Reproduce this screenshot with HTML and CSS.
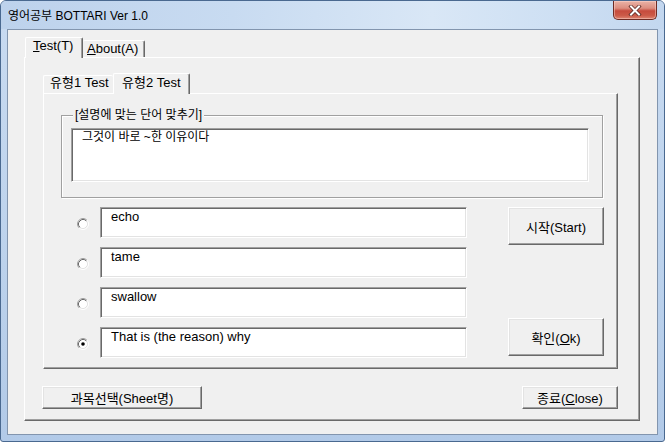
FILE: index.html
```html
<!DOCTYPE html>
<html lang="ko">
<head>
<meta charset="utf-8">
<title>영어공부 BOTTARI Ver 1.0</title>
<link rel="stylesheet" href="styles.css">
</head>
<body>
<div class="window">
  <div class="titlebar">
    <span class="title">영어공부 BOTTARI Ver 1.0</span>
    <div class="close">
      <svg width="14" height="11" viewBox="0 0 14 11">
        <path d="M3 1.5 L11 9.5 M11 1.5 L3 9.5" stroke="#5e2a24" stroke-width="3.6" stroke-linecap="square"/>
        <path d="M3 1.5 L11 9.5 M11 1.5 L3 9.5" stroke="#ffffff" stroke-width="2" stroke-linecap="square"/>
      </svg>
    </div>
  </div>
  <div class="client">
    <div class="tabs outer-tabs">
      <div class="tab active tab-test"><u>T</u>est(T)</div>
      <div class="tab tab-about"><u>A</u>bout(A)</div>
    </div>
    <div class="panel outer-panel">
      <div class="tabs inner-tabs">
        <div class="tab tab-t1">유형1 Test</div>
        <div class="tab active tab-t2">유형2 Test</div>
      </div>
      <div class="panel inner-panel">
        <div class="group">
          <span class="group-label">[설명에 맞는 단어 맞추기]</span>
          <div class="textbox big">그것이 바로 ~한 이유이다</div>
        </div>
        <div class="quiz">
          <div class="options">
            <div class="option">
              <svg class="radio" width="12" height="12" viewBox="0 0 12 12">
                <circle cx="6" cy="6" r="4.5" fill="#fff"/>
                <path d="M9.89 2.11A5.5 5.5 0 0 1 2.11 9.89" fill="none" stroke="#ffffff"/>
                <path d="M9.18 2.82A4.5 4.5 0 0 1 2.82 9.18" fill="none" stroke="#e3e3e3"/>
                <path d="M2.11 9.89A5.5 5.5 0 0 1 9.89 2.11" fill="none" stroke="#a0a0a0"/>
                <path d="M2.82 9.18A4.5 4.5 0 0 1 9.18 2.82" fill="none" stroke="#696969"/>
              </svg>
              <div class="textbox">echo</div>
            </div>
            <div class="option">
              <svg class="radio" width="12" height="12" viewBox="0 0 12 12">
                <circle cx="6" cy="6" r="4.5" fill="#fff"/>
                <path d="M9.89 2.11A5.5 5.5 0 0 1 2.11 9.89" fill="none" stroke="#ffffff"/>
                <path d="M9.18 2.82A4.5 4.5 0 0 1 2.82 9.18" fill="none" stroke="#e3e3e3"/>
                <path d="M2.11 9.89A5.5 5.5 0 0 1 9.89 2.11" fill="none" stroke="#a0a0a0"/>
                <path d="M2.82 9.18A4.5 4.5 0 0 1 9.18 2.82" fill="none" stroke="#696969"/>
              </svg>
              <div class="textbox">tame</div>
            </div>
            <div class="option">
              <svg class="radio" width="12" height="12" viewBox="0 0 12 12">
                <circle cx="6" cy="6" r="4.5" fill="#fff"/>
                <path d="M9.89 2.11A5.5 5.5 0 0 1 2.11 9.89" fill="none" stroke="#ffffff"/>
                <path d="M9.18 2.82A4.5 4.5 0 0 1 2.82 9.18" fill="none" stroke="#e3e3e3"/>
                <path d="M2.11 9.89A5.5 5.5 0 0 1 9.89 2.11" fill="none" stroke="#a0a0a0"/>
                <path d="M2.82 9.18A4.5 4.5 0 0 1 9.18 2.82" fill="none" stroke="#696969"/>
              </svg>
              <div class="textbox">swallow</div>
            </div>
            <div class="option">
              <svg class="radio" width="12" height="12" viewBox="0 0 12 12">
                <circle cx="6" cy="6" r="4.5" fill="#fff"/>
                <path d="M9.89 2.11A5.5 5.5 0 0 1 2.11 9.89" fill="none" stroke="#ffffff"/>
                <path d="M9.18 2.82A4.5 4.5 0 0 1 2.82 9.18" fill="none" stroke="#e3e3e3"/>
                <path d="M2.11 9.89A5.5 5.5 0 0 1 9.89 2.11" fill="none" stroke="#a0a0a0"/>
                <path d="M2.82 9.18A4.5 4.5 0 0 1 9.18 2.82" fill="none" stroke="#696969"/>
                <circle cx="6" cy="6" r="1.8" fill="#000"/>
              </svg>
              <div class="textbox">That is (the reason) why</div>
            </div>
          </div>
          <div class="actions">
            <button class="btn btn-big">시작(Start)</button>
            <button class="btn btn-big">확인(<u>O</u>k)</button>
          </div>
        </div>
      </div>
      <div class="footer">
        <button class="btn btn-sheet">과목선택(Sheet명)</button>
        <button class="btn btn-close">종료(<u>C</u>lose)</button>
      </div>
    </div>
  </div>
</div>
</body>
</html>
```
FILE: styles.css
```css
* {
  box-sizing: border-box;
}

html, body {
  margin: 0;
  padding: 0;
}

body {
  width: 665px;
  height: 442px;
  overflow: hidden;
  background: #ffffff;
  font-family: "Liberation Sans", "Noto Sans CJK KR", sans-serif;
  font-size: 13px;
  color: #000;
}

.window {
  width: 665px;
  height: 442px;
  border: 1px solid #4a6990;
  border-radius: 6px 6px 3px 3px;
  overflow: hidden;
  padding: 0 6px 6px 6px;
  background: linear-gradient(180deg, #c9dbf1 0%, #bcd2ec 60%, #b2cae8 100%);
  display: flex;
  flex-direction: column;
}

.titlebar {
  height: 28px;
  margin: 0 -6px;
  padding: 0 7px 0 7px;
  display: flex;
  align-items: center;
  justify-content: space-between;
  background: linear-gradient(90deg, #bdd2ec 0%, #c8dbf1 35%, #d9e7f6 65%, #cddff3 85%, #c3d7ef 100%);
}

.title {
  font-size: 12px;
  line-height: 14px;
  color: #000;
  padding-left: 0;
  margin-top: 2px;
}

.close {
  align-self: flex-start;
  width: 44px;
  height: 19px;
  border: 1px solid #6e2b24;
  border-top: none;
  border-radius: 0 0 5px 5px;
  background: linear-gradient(180deg, #eab3a7 0%, #dc8d7f 40%, #c64b3d 55%, #cc5a48 80%, #dd8471 100%);
  box-shadow: inset 0 0 0 1px rgba(255, 220, 210, 0.45);
  display: flex;
  align-items: center;
  justify-content: center;
}

.client {
  height: 406px;
  border: 1px solid #8295ae;
  background: #f0f0f0;
  padding: 7px 0 0 16px;
}

/* tabs */
.tabs {
  display: flex;
  align-items: flex-start;
  height: 21px;
  margin-bottom: -1px;
}

.outer-tabs {
  padding-left: 1px;
}

.tab {
  height: 17px;
  margin-top: 3px;
  border-top: 1px solid #ffffff;
  border-left: 1px solid #ffffff;
  border-right: 1px solid #696969;
  border-radius: 2px 2px 0 0;
  box-shadow: inset -1px 0 0 #a0a0a0;
  background: #f0f0f0;
  white-space: nowrap;
  line-height: 15px;
}

.tab.active {
  height: 21px;
  margin-top: 0;
  position: relative;
  z-index: 1;
  line-height: 16px;
}

.tab-test {
  width: 58px;
  padding-left: 7px;
}

.tab-about {
  width: 62px;
  padding-left: 4px;
  border-left: none;
}

.tab-t1 {
  width: 70px;
  height: 18px;
  margin-top: 2px;
  padding-left: 6px;
  line-height: 14px;
  border-right: none;
  box-shadow: none;
}

.tab-t2 {
  width: 77px;
  padding-left: 8px;
  line-height: 14px;
  padding-top: 1px;
}

/* panels */
.panel {
  border: 1px solid;
  border-color: #ffffff #696969 #696969 #ffffff;
  box-shadow: inset -1px -1px 0 #a0a0a0;
  background: #f0f0f0;
}

.outer-panel {
  width: 616px;
  height: 364px;
  padding: 15px 0 11px 18px;
}

.inner-panel {
  width: 575px;
  height: 276px;
  padding: 21px 0 0 17px;
}

/* group box */
.group {
  width: 542px;
  border: 1px solid #a0a0a0;
  box-shadow: inset 1px 1px 0 #ffffff, 1px 1px 0 #ffffff;
  padding: 0 13px 15px 9px;
}

.group-label {
  display: block;
  width: fit-content;
  margin: -8px 0 0 2px;
  padding: 0 2px;
  height: 14px;
  line-height: 14px;
  font-size: 12px;
  background: #f0f0f0;
}

.textbox {
  background: #ffffff;
  border: 1px solid;
  border-color: #a0a0a0 #ffffff #ffffff #a0a0a0;
  box-shadow: inset 1px 1px 0 #696969, inset -1px -1px 0 #e3e3e3;
  padding: 1px 0 0 10px;
  font-size: 13px;
  line-height: 15px;
  white-space: nowrap;
}

.textbox.big {
  margin-top: 6px;
  height: 54px;
  font-size: 12px;
  line-height: 14px;
  padding-top: 1px;
}

/* quiz rows */
.quiz {
  display: flex;
  margin-top: 9px;
  padding-left: 16px;
}

.options {
  display: flex;
  flex-direction: column;
  gap: 9px;
}

.option {
  display: flex;
  align-items: center;
  height: 31px;
}

.radio {
  flex: none;
  margin: 3px 11px 0 0;
}

.option .textbox {
  width: 367px;
  height: 31px;
}

.actions {
  display: flex;
  flex-direction: column;
  gap: 73px;
  margin-left: 41px;
}

/* buttons */
.btn {
  font-family: "Liberation Sans", "Noto Sans CJK KR", sans-serif;
  font-size: 13px;
  color: #000;
  background: #f0f0f0;
  border: 1px solid;
  border-color: #ffffff #696969 #696969 #ffffff;
  box-shadow: inset -1px -1px 0 #a0a0a0, inset 1px 1px 0 #e3e3e3;
  padding: 0;
  margin: 0;
  text-align: center;
  white-space: nowrap;
}

.btn-big {
  width: 96px;
  height: 38px;
}

.footer {
  width: 575px;
  margin-top: 17px;
  display: flex;
  justify-content: space-between;
}

.btn-sheet {
  width: 160px;
  height: 23px;
  margin-left: -1px;
}

.btn-close {
  width: 96px;
  height: 23px;
}
```
